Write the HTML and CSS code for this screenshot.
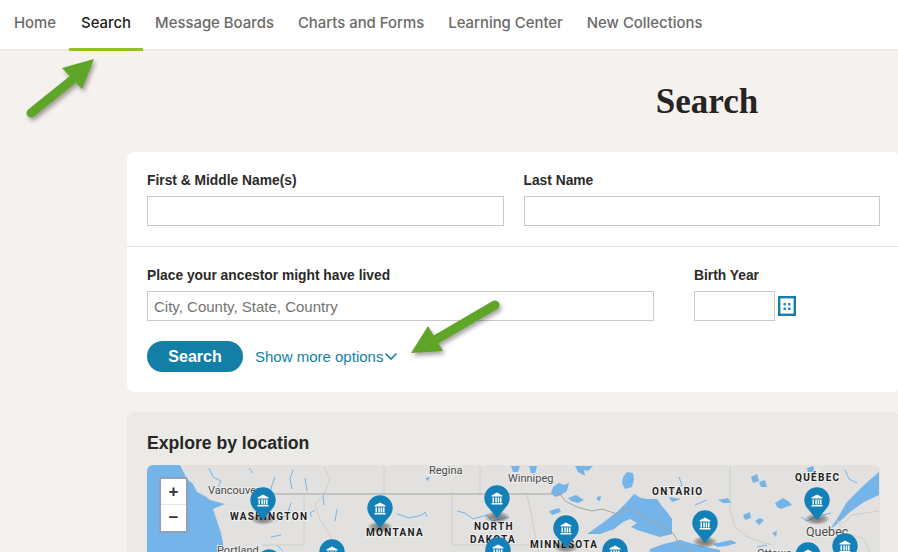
FILE: index.html
```html
<!DOCTYPE html>
<html lang="en">
<head>
    <meta charset="UTF-8">
    <meta name="viewport" content="width=device-width, initial-scale=1.0">
    <title>Search</title>
    <link rel="stylesheet" href="styles.css">
</head>
<body>
    <nav class="topnav">
        <a href="#" class="nav-link">Home</a>
        <a href="#" class="nav-link active">Search</a>
        <a href="#" class="nav-link">Message Boards</a>
        <a href="#" class="nav-link">Charts and Forms</a>
        <a href="#" class="nav-link">Learning Center</a>
        <a href="#" class="nav-link">New Collections</a>
    </nav>

    <main class="page">
        <h1 class="page-title">Search</h1>

        <form class="card search-card">
            <div class="form-row">
                <div class="field grow">
                    <label for="first-name">First &amp; Middle Name(s)</label>
                    <input type="text" id="first-name">
                </div>
                <div class="field grow">
                    <label for="last-name">Last Name</label>
                    <input type="text" id="last-name">
                </div>
            </div>
            <div class="form-row lower">
                <div class="field place">
                    <label for="place">Place your ancestor might have lived</label>
                    <input type="text" id="place" placeholder="City, County, State, Country">
                </div>
                <div class="field year">
                    <label for="birth-year">Birth Year</label>
                    <div class="year-input">
                        <input type="text" id="birth-year">
                        <svg class="calendar" width="18" height="20" viewBox="0 0 18 20">
                            <rect x="1.200" y="1.200" width="15.600" height="17.600" fill="#fff" stroke="#147fa6" stroke-width="2.400"/>
                            <rect x="5.500" y="7" width="2.500" height="2.500" fill="#2a90b5"/>
                            <rect x="10" y="7" width="2.500" height="2.500" fill="#2a90b5"/>
                            <rect x="5.500" y="11.500" width="2.500" height="2.500" fill="#2a90b5"/>
                            <rect x="10" y="11.500" width="2.500" height="2.500" fill="#2a90b5"/>
                        </svg>
                    </div>
                </div>
            </div>
            <div class="form-actions">
                <button type="button" class="btn-search">Search</button>
                <a href="#" class="more-link"><span>Show more options</span><svg width="14" height="9" viewBox="0 0 14 9"><path d="M1.500 1.500 7 7l5.500-5.500" fill="none" stroke="#147fa6" stroke-width="1.600"/></svg></a>
            </div>
        </form>

        <section class="card explore-card">
            <h2>Explore by location</h2>
            <div class="map">
                <svg class="map-art" width="733" height="100" viewBox="0 0 733 100">
                    <defs>
                        <radialGradient id="pin-shadow">
                            <stop offset="0" stop-color="#000" stop-opacity=".5"/>
                            <stop offset=".6" stop-color="#000" stop-opacity=".3"/>
                            <stop offset="1" stop-color="#000" stop-opacity="0"/>
                        </radialGradient>
                        <g id="pin">
                            <ellipse cx="0" cy="31" rx="13" ry="6" fill="url(#pin-shadow)"/>
                            <path d="M0 32-10.300 19.500A12.700 12.700 0 1 1 10.300 19.500Z" fill="#1381b8"/>
                            <path d="M-5.500 9.500 0 6.500l5.500 3v1h-11ZM-4.500 11.500h1.500v5h-1.500ZM-1.700 11.500H-.2v5h-1.500ZM.7 11.500h1.500v5H.7ZM3 11.500h1.500v5H3ZM-5.500 17h11v1.500h-11Z" fill="#fff"/>
                        </g>
                    </defs>

                    <!-- coast and big lakes -->
                    <path class="water" d="M0 0H33L36 6 40 14 46 19 50 27 58 31 63 35 78 39 66 44 68 50 70 56 74 68 76 78 80 100H0Z"/>
                    <path class="water" d="M440 69 457 57 470 47 480 37 487 29 494 33 500 34 510 34 515 41 520 47 525 54 525 69 513 72 500 68 490 65 484 62 490 58 483 54 476 57 467 64 453 69Z"/>
                    <path class="water" d="M500 100 503 84 517 79 533 75 550 80 573 85 575 100Z"/>
                    <path class="water" d="M732 7 717 20 700 37 690 54 683 64 690 59 703 47 717 37 732 30Z"/>

                    <!-- small lakes -->
                    <path class="water" d="M476 12 480 7 486 8 487 14 485 22 478 24 475 18Z"/>
                    <path class="water" d="M406 22 412 18 417 20 422 18 420 26 414 30 408 32 404 28Z"/>
                    <path class="water" d="M428 1H446L441 6 437 5 438 11 431 7ZM364 1H373L371 7 366 7ZM382 1H390L388 9 384 8Z"/>
                    <path class="water" d="M421 33 429 30 437 35 431 38 424 36ZM402 46 412 43 414 47 405 50ZM450 32 454 31 453 36 450 35ZM278 13 283 12 281 16Z"/>
                    <path class="water" d="M628 38 636 33 641 36 645 40 639 42 634 44 630 42Z"/>
                    <path class="water" d="M596 50 603 47 604 53 598 55ZM608 56 613 53 617 55 612 60ZM604 12 610 9 612 16 606 18ZM612 17 618 15 620 22 614 22ZM625 68 630 66 629 72ZM522 32 534 34 525 37ZM571 35 581 33 585 38 576 38ZM660 3 666 1 668 7 661 8Z"/>
                    <path class="water" d="M566 79 584 75 590 78 580 81 570 82Z"/>

                    <!-- rivers -->
                    <g class="river">
                        <path d="M62 3 66 12 74 16 70 24 82 30"/>
                        <path d="M102 3 106 8"/>
                        <path d="M128 12 125 20 123 28"/>
                        <path d="M146 5 143 14 145 24"/>
                        <path d="M158 13 160 26"/>
                        <path d="M144 38 140 50 128 56"/>
                        <path d="M168 45 163 48 165 52"/>
                        <path d="M176 30 177 40"/>
                        <path d="M190 44 188 56"/>
                        <path d="M124 72 134 70M130 80 136 86"/>
                        <path d="M250 49 262 53 275 50 278 47 280 52"/>
                        <path d="M310 46 318 48 326 54 340 50 345 56 362 52"/>
                        <path d="M658 40 668 42 676 50 684 48"/>
                        <path d="M654 52 660 56 668 52"/>
                        <path d="M532 12 535 20 530 24"/>
                        <path d="M698 5 702 14 710 18"/>
                        <path d="M560 35 548 40"/>
                        <path d="M610 82 620 80"/>
                    </g>

                    <!-- borders -->
                    <g class="border">
                        <path d="M157 29V80"/>
                        <path d="M177 2 183 14 177 29 168 40 173 54 183 70 188 84"/>
                        <path d="M237 2V29"/>
                        <path d="M333 2V29"/>
                        <path d="M305 29V80"/>
                        <path d="M115 80H157"/>
                        <path d="M305 80H384"/>
                        <path d="M380 29 384 48 388 70 394 95"/>
                        <path d="M583 2V45L588 62 600 72 625 80"/>
                        <path d="M732 46 705 50 697 58 690 56 700 68 717 74 725 92"/>
                    </g>
                    <path class="border national" d="M110 29H413L418 36 430 42 445 46 455 44 470 49 481 42 500 54 526 68 533 80 555 92"/>

                    <!-- labels -->
                    <text class="city" x="61" y="29">Vancouver</text>
                    <text class="city" x="282" y="9">Regina</text>
                    <text class="city" x="361" y="17">Winnipeg</text>
                    <text class="city big" x="659" y="71">Quebec</text>
                    <text class="city" x="70" y="89">Portland</text>
                    <text class="city" x="610" y="92">Ottawa</text>
                    <text class="region" x="83" y="55">WASHINGTON</text>
                    <text class="region" x="219" y="71">MONTANA</text>
                    <text class="region" x="327" y="65">NORTH</text>
                    <text class="region" x="323" y="78">DAKOTA</text>
                    <text class="region" x="383" y="83">MINNESOTA</text>
                    <text class="region" x="505" y="30">ONTARIO</text>
                    <text class="region" x="648" y="16">QUÉBEC</text>

                    <!-- pins -->
                    <use href="#pin" x="116" y="23"/>
                    <use href="#pin" x="233" y="31"/>
                    <use href="#pin" x="350" y="21"/>
                    <use href="#pin" x="419" y="51"/>
                    <use href="#pin" x="558" y="46"/>
                    <use href="#pin" x="670" y="23"/>
                    <use href="#pin" x="122" y="85"/>
                    <use href="#pin" x="185" y="75"/>
                    <use href="#pin" x="351" y="73"/>
                    <use href="#pin" x="468" y="74"/>
                    <use href="#pin" x="661" y="78"/>
                    <use href="#pin" x="698" y="69"/>
                </svg>
                <div class="zoom-control">
                    <button type="button" class="zoom-btn">+</button>
                    <button type="button" class="zoom-btn">−</button>
                </div>
            </div>
        </section>
    </main>

    <svg class="arrow arrow-nav" width="80" height="70" viewBox="0 0 80 70">
        <path d="M11 63 52 30" fill="none" stroke="#5fa528" stroke-width="9" stroke-linecap="round"/>
        <path d="M74 9 42 18 62 39Z" fill="#5fa528"/>
    </svg>
    <svg class="arrow arrow-more" width="100" height="66" viewBox="0 0 100 66">
        <path d="M90 11 30 46" fill="none" stroke="#5fa528" stroke-width="9" stroke-linecap="round"/>
        <path d="M6 59 23 32 38 57Z" fill="#5fa528"/>
    </svg>
</body>
</html>
```

FILE: styles.css
```css
body {
    font-family: "Liberation Sans", Arial, sans-serif;
    margin: 0;
    width: 898px;
    height: 552px;
    overflow: hidden;
    position: relative;
    background-color: #f5f1ee;
    color: #2a2a28;
}

.topnav {
    display: flex;
    height: 49px;
    padding-left: 2px;
    background: #fff;
    box-shadow: 0 1px 2px rgba(0, 0, 0, 0.06);
}

.nav-link {
    display: block;
    height: 48px;
    padding: 0 12px;
    line-height: 46px;
    font-family: Inter, sans-serif;
    font-size: 14.900px;
    font-weight: 500;
    color: #6c6a68;
    text-decoration: none;
    border-bottom: 3px solid transparent;
}

.nav-link:first-child {
    margin-right: 1px;
}

.nav-link.active {
    color: #222;
    border-bottom-color: #95c11f;
}

.page {
    width: 1160px;
    margin-left: 127px;
}

.page-title {
    margin: 0;
    padding: 31px 0 28px;
    font-family: "Liberation Serif", serif;
    font-size: 35px;
    line-height: 44px;
    text-align: center;
    color: #262422;
}

.card {
    width: 773px;
    box-sizing: border-box;
    border-radius: 8px;
    padding: 0 20px;
}

.search-card {
    height: 240px;
    background: #fff;
}

.form-row {
    display: flex;
    gap: 20px;
    padding-top: 21px;
}

.form-row.lower {
    position: relative;
    margin-top: 20px;
    gap: 40px;
    border-top: 1px solid #e6e4e1;
    margin-left: -20px;
    margin-right: -20px;
    padding-left: 20px;
    padding-right: 20px;
}

.field label {
    display: block;
    height: 16px;
    margin-bottom: 7px;
    font-size: 13.800px;
    line-height: 16px;
    font-weight: bold;
    color: #2a2a28;
}

.field input {
    display: block;
    box-sizing: border-box;
    width: 100%;
    height: 30px;
    padding: 0 6px;
    border: 1px solid #c9c9c9;
    font-family: inherit;
    font-size: 15px;
    background: #fff;
}

.field input::placeholder {
    color: #737373;
}

.grow {
    flex: 1;
}

.place {
    width: 507px;
}

.year-input {
    display: flex;
    align-items: center;
    gap: 3px;
}

.year-input input {
    width: 81px;
}

.form-actions {
    display: flex;
    align-items: center;
    gap: 12px;
    margin-top: 20px;
}

.btn-search {
    width: 96px;
    height: 31px;
    border: 0;
    border-radius: 16px;
    background: #147fa6;
    color: #fff;
    font-family: inherit;
    font-size: 16px;
    font-weight: bold;
}

.more-link {
    display: flex;
    align-items: center;
    gap: 1px;
    font-size: 15px;
    color: #147fa6;
    text-decoration: none;
}

.explore-card {
    height: 200px;
    margin-top: 20px;
    background: #eceae6;
}

.explore-card h2 {
    margin: 0;
    padding: 20px 0 10px;
    font-size: 17.600px;
    line-height: 23px;
    color: #262626;
}

.map {
    position: relative;
    height: 120px;
    width: 733px;
    overflow: hidden;
    border-radius: 6px 6px 0 0;
    background: #e2e1df;
}

.map-art {
    display: block;
}

.water {
    fill: #74b4e8;
}

.river {
    fill: none;
    stroke: #74b4e8;
    stroke-width: 1;
}

.border {
    fill: none;
    stroke: #cfcecb;
    stroke-width: 1;
}

.border.national {
    stroke: #a3a3a1;
}

.city {
    font-family: Roboto, sans-serif;
    font-size: 11px;
    fill: #4a4a4a;
    stroke: #eeeeec;
    stroke-width: 2px;
    paint-order: stroke;
}

.city.big {
    font-size: 12.500px;
}

.region {
    font-family: Roboto, sans-serif;
    font-size: 10px;
    font-weight: bold;
    letter-spacing: 1.300px;
    fill: #222;
    stroke: #f0f0ee;
    stroke-width: 2px;
    paint-order: stroke;
}

.zoom-control {
    position: absolute;
    top: 12px;
    left: 12px;
    width: 25px;
    border: 2px solid rgba(70, 100, 140, 0.6);
    border-radius: 3px;
    background: #fff;
}

.zoom-btn {
    display: block;
    width: 100%;
    height: 26px;
    padding: 0;
    border: 0;
    border-bottom: 1px solid #e5e5e5;
    background: #fff;
    font-family: inherit;
    font-size: 17px;
    font-weight: bold;
    color: #333;
}

.zoom-btn:last-child {
    border-bottom: 0;
}

.arrow {
    position: absolute;
    filter: drop-shadow(2px 3px 2px rgba(0, 0, 0, 0.35));
}

.arrow-nav {
    top: 50px;
    left: 20px;
}

.arrow-more {
    top: 294px;
    left: 405px;
}
```
